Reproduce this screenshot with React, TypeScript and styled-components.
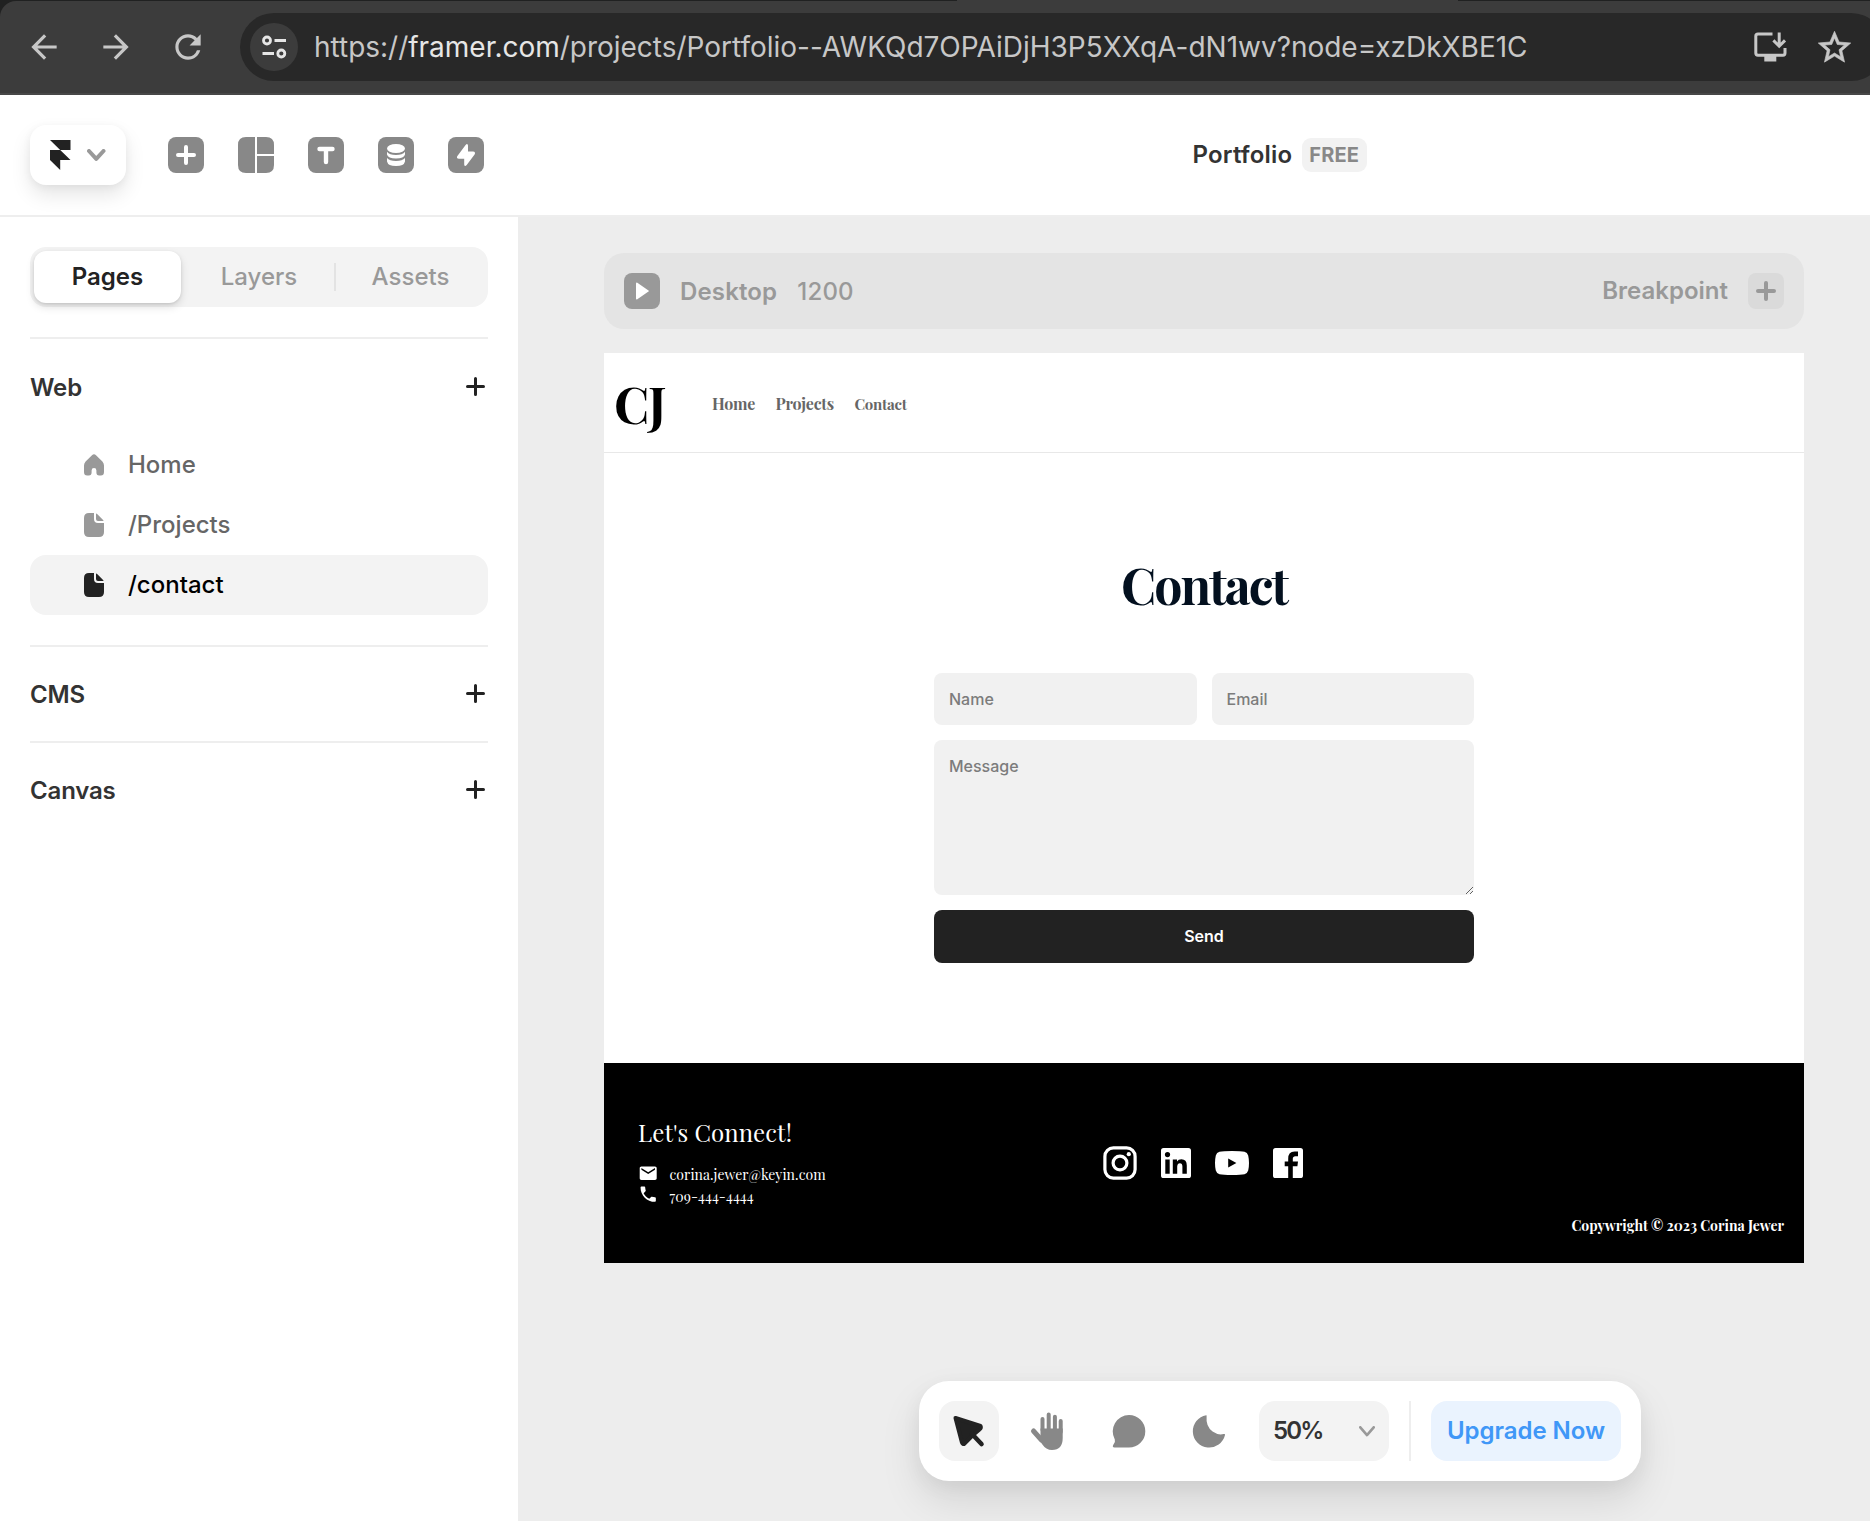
import React from "react";
import styled, { createGlobalStyle } from "styled-components";
import { MdArrowBack, MdArrowForward, MdEmail, MdPhone, MdRefresh } from "react-icons/md";

const GlobalStyle = createGlobalStyle`
  *, *::before, *::after { box-sizing: border-box; }
  html, body { margin: 0; padding: 0; }
  body {
    font-family: Inter, "Liberation Sans", sans-serif;
    background: #ededed;
    overflow: hidden;
  }
  svg { display: block; flex: none; }
  button, input, textarea { font-family: inherit; border: 0; padding: 0; margin: 0; outline: 0; }
`;

const serif = `"Playfair Display", "Liberation Serif", serif`;

const Screen = styled.div`
  width: 1870px;
  height: 1521px;
  display: flex;
  flex-direction: column;
  overflow: hidden;
`;

/* ---------- Browser chrome ---------- */

const Chrome = styled.div`
  height: 95px;
  flex: none;
  background: #202121;
`;

const TabStrip = styled.div`
  height: 1px;
  padding-left: 957px;
`;

const ActiveTabEdge = styled.div`
  width: 501px;
  height: 1px;
  background: #3c3c3c;
`;

const ChromeBar = styled.div`
  height: 94px;
  display: flex;
  align-items: flex-start;
  padding: 12px 0 0 25px;
  background: #3c3c3c;
  border-bottom: 2px solid #474747;
  border-top-left-radius: 16px;
`;

const ChromeNav = styled.div`
  display: flex;
  flex: none;
  align-items: center;
  gap: 34px;
  width: 215px;
  height: 68px;
  color: #c7c7c7;
`;

const AddressBar = styled.div`
  width: 1645px;
  height: 68px;
  flex: none;
  display: flex;
  align-items: center;
  padding: 0 31px 0 10px;
  border-radius: 34px;
  background: #282828;
  color: #c7c7c7;
`;

const SiteControls = styled.div`
  width: 48px;
  height: 48px;
  display: grid;
  place-items: center;
  border-radius: 50%;
  background: #3c3c3c;
`;

const Url = styled.div`
  flex: 1;
  margin-left: 16px;
  font-size: 28px;
  line-height: 34px;
  letter-spacing: -0.015px;
  white-space: nowrap;

  strong {
    font-weight: 400;
    color: #e6e6e6;
  }
`;

const AddressActions = styled.div`
  display: flex;
  align-items: center;
  gap: 28px;
`;

/* ---------- App header ---------- */

const Header = styled.header`
  height: 122px;
  flex: none;
  display: flex;
  align-items: center;
  padding-left: 30px;
  background: #fff;
  border-bottom: 2px solid #eee;
`;

const MenuButton = styled.button`
  width: 96px;
  height: 60px;
  display: flex;
  align-items: center;
  gap: 16px;
  padding-left: 20px;
  border-radius: 16px;
  background: #fff;
  box-shadow: 0 10px 20px rgba(0, 0, 0, 0.1), 0 2px 8px rgba(0, 0, 0, 0.05);
`;

const Tools = styled.div`
  display: flex;
  gap: 34px;
  margin-left: 42px;
`;

const ProjectTitle = styled.div`
  display: flex;
  align-items: center;
  gap: 9.5px;
  margin-left: 708.5px;
  font-size: 24px;
  line-height: 30px;
  font-weight: 600;
  letter-spacing: 0.17px;
  color: #333;
`;

const PlanBadge = styled.span`
  width: 65px;
  height: 34px;
  display: grid;
  place-items: center;
  border-radius: 9px;
  background: #f2f2f2;
  font-size: 20px;
  font-weight: 700;
  color: #888;
`;

/* ---------- Body ---------- */

const Body = styled.div`
  flex: 1;
  min-height: 0;
  display: flex;
`;

const Sidebar = styled.aside`
  width: 518px;
  flex: none;
  padding: 30px 30px 0;
  background: #fff;
`;

const Tabs = styled.div`
  height: 60px;
  display: flex;
  gap: 1.5px;
  padding: 4px;
  border-radius: 16px;
  background: #f3f3f3;
`;

const Tab = styled.div<{ $active?: boolean }>`
  width: 147px;
  flex: none;
  display: grid;
  place-items: center;
  margin-right: ${(p) => (p.$active ? "3px" : "0")};
  border-radius: 12px;
  font-size: 24px;
  line-height: 30px;
  font-weight: ${(p) => (p.$active ? 600 : 500)};
  color: ${(p) => (p.$active ? "#222" : "#999")};
  background: ${(p) => (p.$active ? "#fff" : "transparent")};
  box-shadow: ${(p) => (p.$active ? "0 4px 8px rgba(0,0,0,.13), 0 1px 3px rgba(0,0,0,.1)" : "none")};
`;

const TabDivider = styled.div`
  width: 2px;
  height: 28px;
  align-self: center;
  background: #e3e3e3;
`;

const Section = styled.section<{ $first?: boolean }>`
  margin-top: ${(p) => (p.$first ? "30px" : "0")};
  border-top: 2px solid #eee;
  padding-top: ${(p) => (p.$first ? "1px" : "0")};
`;

const SectionHead = styled.div`
  height: 94px;
  display: flex;
  align-items: center;
  justify-content: space-between;
  padding: 2px 3px 0 0;
  font-size: 24px;
  line-height: 30px;
  font-weight: 600;
  letter-spacing: -0.16px;
  color: #333;

  svg { margin-bottom: 3px; }
`;

const PageList = styled.ul`
  list-style: none;
  margin: 1px 0 30px;
  padding: 0;
`;

const PageItem = styled.li<{ $active?: boolean }>`
  height: 60px;
  display: grid;
  grid-template-columns: 20px 1fr;
  align-items: center;
  column-gap: 24px;
  padding-left: 54px;
  border-radius: 16px;
  background: ${(p) => (p.$active ? "#f3f3f3" : "transparent")};
  color: ${(p) => (p.$active ? "#000" : "#666")};
  font-size: 24px;
  line-height: 30px;
  font-weight: 500;

  svg {
    color: ${(p) => (p.$active ? "#222" : "#999")};
  }
`;

/* ---------- Canvas ---------- */

const Canvas = styled.main`
  position: relative;
  flex: 1;
  padding: 36px 66px 0 86px;
  background: #ededed;
`;

const BreakpointBar = styled.div`
  height: 76px;
  display: flex;
  align-items: center;
  padding: 0 20px;
  border-radius: 20px;
  background: #e4e4e4;
  font-size: 24px;
  line-height: 30px;
  font-weight: 600;
  color: #999;
`;

const PlayButton = styled.div`
  width: 36px;
  height: 36px;
  display: grid;
  place-items: center;
  margin-right: 20px;
  border-radius: 8px;
  background: #999;
`;

const DeviceName = styled.span`
  margin-top: 2px;
  letter-spacing: 0.15px;
`;

const DeviceWidth = styled.span`
  flex: 1;
  margin: 2px 0 0 20px;
  font-weight: 500;
  letter-spacing: 0.2px;
`;

const BreakpointLabel = styled.span`
  letter-spacing: 0;
`;

const AddBreakpoint = styled.div`
  width: 36px;
  height: 36px;
  display: grid;
  place-items: center;
  margin-left: 20px;
  border-radius: 8px;
  background: #dadada;
`;

const Page = styled.div`
  margin-top: 24px;
  height: 910px;
  display: flex;
  flex-direction: column;
  background: #fff;
  font-family: ${serif};
`;

const SiteNav = styled.nav`
  height: 100px;
  display: flex;
  align-items: center;
  padding-left: 10px;
  border-bottom: 1px solid #e8e8e8;
`;

const Brand = styled.div`
  width: 98px;
  margin-top: 2px;
  font-size: 50px;
  line-height: 60px;
  font-weight: 700;
  letter-spacing: -1px;
  color: #000;
`;

const SiteLinks = styled.div`
  display: flex;
  align-items: baseline;
  gap: 20.5px;
  margin-top: 3px;
`;

const SiteLink = styled.a<{ $current?: boolean }>`
  font-size: ${(p) => (p.$current ? "15px" : "16px")};
  line-height: 22px;
  font-weight: 700;
  letter-spacing: ${(p) => (p.$current ? "-0.25px" : "-0.25px")};
  color: #666;
`;

const ContactSection = styled.section`
  flex: 1;
  display: flex;
  flex-direction: column;
  align-items: center;
  padding-top: 102px;
`;

const Title = styled.h1`
  margin: 0 0 58px;
  font-size: 50px;
  line-height: 60px;
  font-weight: 700;
  letter-spacing: -2px;
  color: #03101f;
`;

const Form = styled.div`
  width: 540px;
  display: grid;
  grid-template-columns: 1fr 1fr;
  grid-template-rows: 52.4px 155px 52.4px;
  gap: 15px;
  font-family: Inter, "Liberation Sans", sans-serif;
`;

const TextField = styled.input`
  width: 100%;
  padding: 0 15px;
  border-radius: 8px;
  background: #f1f1f1;
  font-size: 16px;
  font-weight: 500;

  &::placeholder { color: #7c7c7c; opacity: 1; }
`;

const MessageField = styled.textarea`
  grid-column: 1 / -1;
  padding: 16px 15px;
  border-radius: 8px;
  background: #f1f1f1;
  font-size: 16px;
  line-height: 20px;
  font-weight: 500;
  resize: vertical;

  &::placeholder { color: #7c7c7c; opacity: 1; }
`;

const SendButton = styled.button`
  grid-column: 1 / -1;
  padding-bottom: 1.6px;
  border-radius: 8px;
  background: #222;
  color: #fff;
  font-size: 16px;
  font-weight: 600;
`;

const Footer = styled.footer`
  height: 200px;
  display: grid;
  grid-template-columns: 1fr auto 1fr;
  padding: 0 20px 0 34px;
  background: #000;
  color: #fff;
`;

const Connect = styled.div`
  padding-top: 54px;
`;

const ConnectTitle = styled.div`
  margin-bottom: 16px;
  font-size: 24px;
  line-height: 30px;
  letter-spacing: 0.08px;
`;

const ConnectRow = styled.div`
  height: 21px;
  display: grid;
  grid-template-columns: 21px auto;
  grid-template-rows: 21px;
  align-items: center;
  column-gap: 10.5px;
`;

const ConnectText = styled.span<{ $drop?: number }>`
  padding-top: ${(p) => p.$drop ?? 2}px;
  font-size: 14px;
  line-height: 18px;
  letter-spacing: 0.06px;
`;

const Socials = styled.div`
  height: 34px;
  display: flex;
  align-items: center;
  gap: 24px;
  margin: 83px 0 0;
  transform: translateX(-8px);
`;

const Copyright = styled.div`
  justify-self: end;
  align-self: end;
  margin-bottom: 28px;
  font-size: 14px;
  line-height: 18px;
  font-weight: 700;
`;

/* ---------- Floating toolbar ---------- */

const Dock = styled.div`
  position: absolute;
  left: 401px;
  bottom: 40px;
  width: 722px;
  height: 100px;
  display: flex;
  align-items: center;
  gap: 20px;
  padding: 0 20px;
  border-radius: 30px;
  background: #fff;
  box-shadow: 0 20px 40px rgba(0, 0, 0, 0.1), 0 6px 20px rgba(0, 0, 0, 0.05);
`;

const DockButton = styled.button<{ $active?: boolean }>`
  width: 60px;
  height: 60px;
  flex: none;
  border-radius: 16px;
  background: ${(p) => (p.$active ? "#f3f3f3" : "transparent")};
`;

const ZoomSelect = styled.div`
  width: 130px;
  height: 60px;
  flex: none;
  display: flex;
  align-items: center;
  justify-content: space-between;
  padding: 0 14px;
  border-radius: 16px;
  background: #f3f3f3;
  font-size: 24px;
  line-height: 30px;
  font-weight: 600;
  letter-spacing: -1.8px;
  color: #333;
`;

const DockDivider = styled.div`
  width: 2px;
  height: 60px;
  background: #eee;
`;

const UpgradeButton = styled.button`
  width: 190px;
  height: 60px;
  flex: none;
  padding-bottom: 2px;
  border-radius: 16px;
  background: #eaf3fe;
  color: #4097f7;
  font-size: 24px;
  font-weight: 600;
  letter-spacing: -0.05px;
  white-space: nowrap;
`;

/* ---------- Icons ---------- */

const TuneIcon = () => (
  <svg width="26" height="24" viewBox="0 0 26 24" fill="none" stroke="#e6e6e6" strokeWidth="2.8">
    <circle cx="6" cy="5.5" r="3.5" />
    <path d="M13.5 5.5H25M1.5 18.5H13" />
    <circle cx="20.3" cy="18.5" r="3.5" />
  </svg>
);

const InstallIcon = () => (
  <svg width="33" height="30" viewBox="0 0 33 30" fill="none" stroke="currentColor" strokeWidth="3">
    <path d="M18.5 2H4Q1.8 2 1.8 4.2V21Q1.8 23.2 4 23.2H29Q31 23.2 31 21V16" />
    <path d="M25.2 0.5V14M19.4 8.4L25.2 14.2L31 8.4" />
    <path d="M10.3 24H22.3V29.5H10.3Z" fill="currentColor" stroke="none" />
  </svg>
);

const StarIcon = () => (
  <svg width="39" height="39" viewBox="0 0 24 24" fill="currentColor" stroke="currentColor" strokeWidth="0.4">
    <path d="M22 9.240l-7.190-.620L12 2 9.190 8.630 2 9.240l5.460 4.730L5.820 21 12 17.270 18.180 21l-1.630-7.030L22 9.240zM12 15.400l-3.760 2.270 1-4.280-3.320-2.880 4.380-.380L12 6.100l1.710 4.040 4.380.380-3.320 2.880 1 4.280L12 15.400z" />
  </svg>
);

const FramerMark = () => (
  <svg width="21" height="30" viewBox="0 0 21 30" fill="#222">
    <path d="M0 0H20.5V10H10.2ZM0 10H10.2L20.5 20H10.2V30L0 20Z" />
  </svg>
);

const Chevron = ({ w, h, stroke }: { w: number; h: number; stroke: number }) => (
  <svg width={w} height={h} viewBox={`0 0 ${w} ${h}`} fill="none" stroke="#999" strokeWidth={stroke} strokeLinecap="round" strokeLinejoin="round">
    <path d={`M${stroke / 2} ${stroke / 2}L${w / 2} ${h - stroke / 2 - 0.6}L${w - stroke / 2} ${stroke / 2}`} />
  </svg>
);

const Plus = ({ size, stroke, color }: { size: number; stroke: number; color: string }) => (
  <svg width={size} height={size} viewBox={`0 0 ${size} ${size}`} stroke={color} strokeWidth={stroke} strokeLinecap="round">
    <path d={`M${size / 2} ${stroke / 2}V${size - stroke / 2}M${stroke / 2} ${size / 2}H${size - stroke / 2}`} />
  </svg>
);

const ToolIcon = ({ children, bare }: { children: React.ReactNode; bare?: boolean }) => (
  <svg width="36" height="36" viewBox="0 0 36 36" fill="#fff">
    {!bare && <rect width="36" height="36" rx="8" fill="#888" />}
    {children}
  </svg>
);

const HomeIcon = () => (
  <svg width="20" height="22" viewBox="0 0 20 22" fill="currentColor">
    <path d="M8 1.2Q10-.6 12 1.2L18.4 7.6Q20 9.4 20 11.5V18Q20 21.5 16.8 21.5H15.2Q12.4 21.5 12.4 18.5V16.4Q12.4 14 10 14T7.6 16.4V18.5Q7.6 21.5 4.8 21.5H3.2Q0 21.5 0 18V11.5Q0 9.4 1.6 7.6Z" />
  </svg>
);

const FileIcon = () => (
  <svg width="20" height="24" viewBox="0 0 20 24" fill="currentColor">
    <path d="M5 0H10V6Q10 10 14 10H20V19Q20 24 15 24H5Q0 24 0 19V5Q0 0 5 0Z" />
    <path d="M12 .4Q12.8.6 13.4 1.2L18.6 6.4Q19.4 7.2 19.6 8H14Q12 8 12 6Z" />
  </svg>
);

const CursorIcon = () => (
  <svg width="60" height="60" viewBox="0 0 60 60" fill="#222" stroke="#222" strokeLinejoin="round" strokeLinecap="round">
    <path d="M16.5 17L41.5 25Q42.5 27 40.5 28.5L34 34L25 43Q23.5 43 22.8 41Z" strokeWidth="4" />
    <path d="M33 33L42.5 43" strokeWidth="4.6" />
  </svg>
);

const HandIcon = () => (
  <svg width="60" height="60" viewBox="0 1 60 60" fill="#888" stroke="#888" strokeLinecap="round" strokeLinejoin="round">
    <path d="M23.5 30V19M29.7 30V14.5M35.9 30V16.8M41.7 32V21" strokeWidth="4" />
    <path d="M14.5 31L22.5 40" strokeWidth="5" />
    <path d="M21.5 28.5H43.7V38Q43.7 50 33 50Q27 50 23 44L17.500 35L21.5 36Z" stroke="none" />
  </svg>
);

const CommentIcon = () => (
  <svg width="60" height="60" viewBox="0 0 60 60" fill="#888">
    <path d="M30 14A16.2 16.2 0 1 1 30 46.6H15.4Q13 46 14.2 44Q16.8 41.2 15.8 38.4A16.4 16.4 0 0 1 30 14Z" />
  </svg>
);

const MoonIcon = () => (
  <svg width="60" height="60" viewBox="0 0 60 60" fill="#888">
    <path d="M27.2 14.2A16.3 16.3 0 1 0 46 34Q46.4 32.6 44.6 33Q39 34.4 33.6 30.6Q26.6 25.4 27.6 15.6Q27.8 14.2 27.2 14.2Z" />
  </svg>
);

const InstagramIcon = () => (
  <svg width="34" height="34" viewBox="0 0 34 34" fill="none" stroke="#fff" strokeWidth="3.2">
    <rect x="1.9" y="1.9" width="30.2" height="30.2" rx="8.5" />
    <circle cx="17" cy="17" r="6.9" />
    <circle cx="25.8" cy="8.2" r="2.1" fill="#fff" stroke="none" />
  </svg>
);

const LinkedInIcon = () => (
  <svg width="30" height="30" viewBox="0 0 30 30" fill="#fff">
    <rect width="30" height="30" rx="2.6" />
    <g fill="#000">
      <circle cx="6.5" cy="6.6" r="2.6" />
      <path d="M4.3 11.6H8.7V25.8H4.3ZM11.8 11.6H16V13.6Q17.3 11.2 20.4 11.2Q25.8 11.2 25.8 17.6V25.8H21.4V18.6Q21.4 15.2 18.9 15.2T16.2 18.6V25.8H11.8Z" />
    </g>
  </svg>
);

const YouTubeIcon = () => (
  <svg width="34" height="24" viewBox="0 0 34 24">
    <path d="M17 0Q26 0 29.5.8Q32.4 1.4 33.2 4.4Q34 8 34 12T33.2 19.6Q32.4 22.6 29.5 23.2Q26 24 17 24T4.5 23.2Q1.6 22.6.8 19.6Q0 16 0 12T.8 4.4Q1.6 1.4 4.5.8Q8 0 17 0Z" fill="#fff" />
    <path d="M13.2 7.4V16.6L21.4 12Z" fill="#000" />
  </svg>
);

const FacebookIcon = () => (
  <svg width="30" height="30" viewBox="0 0 30 30">
    <rect width="30" height="30" rx="2.6" fill="#fff" />
    <path d="M15.200 30V18.200H11.700V13.600H15.200V10.800Q15.200 3.600 21.600 3.600H25V8.200H22.400Q19.800 8.200 19.800 10.800V13.600H25L24.400 18.200H19.800V30Z" fill="#000" />
  </svg>
);

/* ---------- View ---------- */

function BrowserChrome() {
  return (
    <Chrome>
      <TabStrip>
        <ActiveTabEdge />
      </TabStrip>
      <ChromeBar>
        <ChromeNav>
          <MdArrowBack size={38} />
          <MdArrowForward size={38} />
          <MdRefresh size={38} />
        </ChromeNav>
        <AddressBar>
          <SiteControls>
            <TuneIcon />
          </SiteControls>
          <Url>
            https://<strong>framer.com</strong>/projects/Portfolio--AWKQd7OPAiDjH3P5XXqA-dN1wv?node=xzDkXBE1C
          </Url>
          <AddressActions>
            <InstallIcon />
            <StarIcon />
          </AddressActions>
        </AddressBar>
      </ChromeBar>
    </Chrome>
  );
}

function AppHeader() {
  return (
    <Header>
      <MenuButton>
        <FramerMark />
        <Chevron w={18.5} h={12.5} stroke={4} />
      </MenuButton>
      <Tools>
        <ToolIcon>
          <path d="M18 10V26M10 18H26" stroke="#fff" strokeWidth="4" strokeLinecap="round" />
        </ToolIcon>
        <ToolIcon bare>
          <path fill="#888" d="M8 0H17V36H8Q0 36 0 28V8Q0 0 8 0ZM19 0H28Q36 0 36 8V17H19ZM19 19H36V28Q36 36 28 36H19Z" />
        </ToolIcon>
        <ToolIcon>
          <path d="M11.500 12H24.500M18 12V25" stroke="#fff" strokeWidth="4.400" strokeLinecap="round" />
        </ToolIcon>
        <ToolIcon>
          <ellipse cx="18" cy="11.500" rx="9" ry="4.600" />
          <path d="M9 14.800Q11.500 18 18 18T27 14.800V17.400Q26 21.400 18 21.400T9 17.400Z" />
          <path d="M9 21Q11.500 24 18 24T27 21V24.400Q26 29 18 29T9 24.400Z" />
        </ToolIcon>
        <ToolIcon>
          <path d="M17.400 8.200Q19.600 5.600 20 8.600V14.600H25Q28 15 26.600 17.400L18.700 28Q16.600 30.400 16.200 27.400V21.800H11Q8 21.400 9.400 19Z" />
        </ToolIcon>
      </Tools>
      <ProjectTitle>
        Portfolio <PlanBadge>FREE</PlanBadge>
      </ProjectTitle>
    </Header>
  );
}

function SectionTitle({ label }: { label: string }) {
  return (
    <SectionHead>
      {label}
      <Plus size={19} stroke={3} color="#222" />
    </SectionHead>
  );
}

function PagesSidebar() {
  return (
    <Sidebar>
      <Tabs>
        <Tab $active>Pages</Tab>
        <Tab>Layers</Tab>
        <TabDivider />
        <Tab>Assets</Tab>
      </Tabs>
      <Section $first>
        <SectionTitle label="Web" />
        <PageList>
          <PageItem>
            <HomeIcon />
            Home
          </PageItem>
          <PageItem>
            <FileIcon />
            /Projects
          </PageItem>
          <PageItem $active>
            <FileIcon />
            /contact
          </PageItem>
        </PageList>
      </Section>
      <Section>
        <SectionTitle label="CMS" />
      </Section>
      <Section>
        <SectionTitle label="Canvas" />
      </Section>
    </Sidebar>
  );
}

function SitePreview() {
  return (
    <Page>
      <SiteNav>
        <Brand>CJ</Brand>
        <SiteLinks>
          <SiteLink>Home</SiteLink>
          <SiteLink>Projects</SiteLink>
          <SiteLink $current>Contact</SiteLink>
        </SiteLinks>
      </SiteNav>
      <ContactSection>
        <Title>Contact</Title>
        <Form>
          <TextField placeholder="Name" />
          <TextField placeholder="Email" />
          <MessageField placeholder="Message" />
          <SendButton>Send</SendButton>
        </Form>
      </ContactSection>
      <Footer>
        <Connect>
          <ConnectTitle>Let's Connect!</ConnectTitle>
          <ConnectRow>
            <MdEmail size={20.4} />
            <ConnectText>corina.jewer@keyin.com</ConnectText>
          </ConnectRow>
          <ConnectRow>
            <MdPhone size={20.4} />
            <ConnectText $drop={4}>709-444-4444</ConnectText>
          </ConnectRow>
        </Connect>
        <Socials>
          <InstagramIcon />
          <LinkedInIcon />
          <YouTubeIcon />
          <FacebookIcon />
        </Socials>
        <Copyright>Copywright © 2023 Corina Jewer</Copyright>
      </Footer>
    </Page>
  );
}

function BottomDock() {
  return (
    <Dock>
      <DockButton $active>
        <CursorIcon />
      </DockButton>
      <DockButton>
        <HandIcon />
      </DockButton>
      <DockButton>
        <CommentIcon />
      </DockButton>
      <DockButton>
        <MoonIcon />
      </DockButton>
      <ZoomSelect>
        50%
        <Chevron w={16} h={11} stroke={2.6} />
      </ZoomSelect>
      <DockDivider />
      <UpgradeButton>Upgrade Now</UpgradeButton>
    </Dock>
  );
}

export default function App() {
  return (
    <Screen>
      <GlobalStyle />
      <BrowserChrome />
      <AppHeader />
      <Body>
        <PagesSidebar />
        <Canvas>
          <BreakpointBar>
            <PlayButton>
              <svg width="14" height="18" viewBox="-0.5 0 14 18" fill="#fff">
                <path d="M.5 1.200Q.8.200 1.800.800L13 8.400Q13.600 9 13 9.600L1.800 17.200Q.8 17.800.5 16.800Z" />
              </svg>
            </PlayButton>
            <DeviceName>Desktop</DeviceName>
            <DeviceWidth>1200</DeviceWidth>
            <BreakpointLabel>Breakpoint</BreakpointLabel>
            <AddBreakpoint>
              <Plus size={20} stroke={4} color="#999" />
            </AddBreakpoint>
          </BreakpointBar>
          <SitePreview />
          <BottomDock />
        </Canvas>
      </Body>
    </Screen>
  );
}
